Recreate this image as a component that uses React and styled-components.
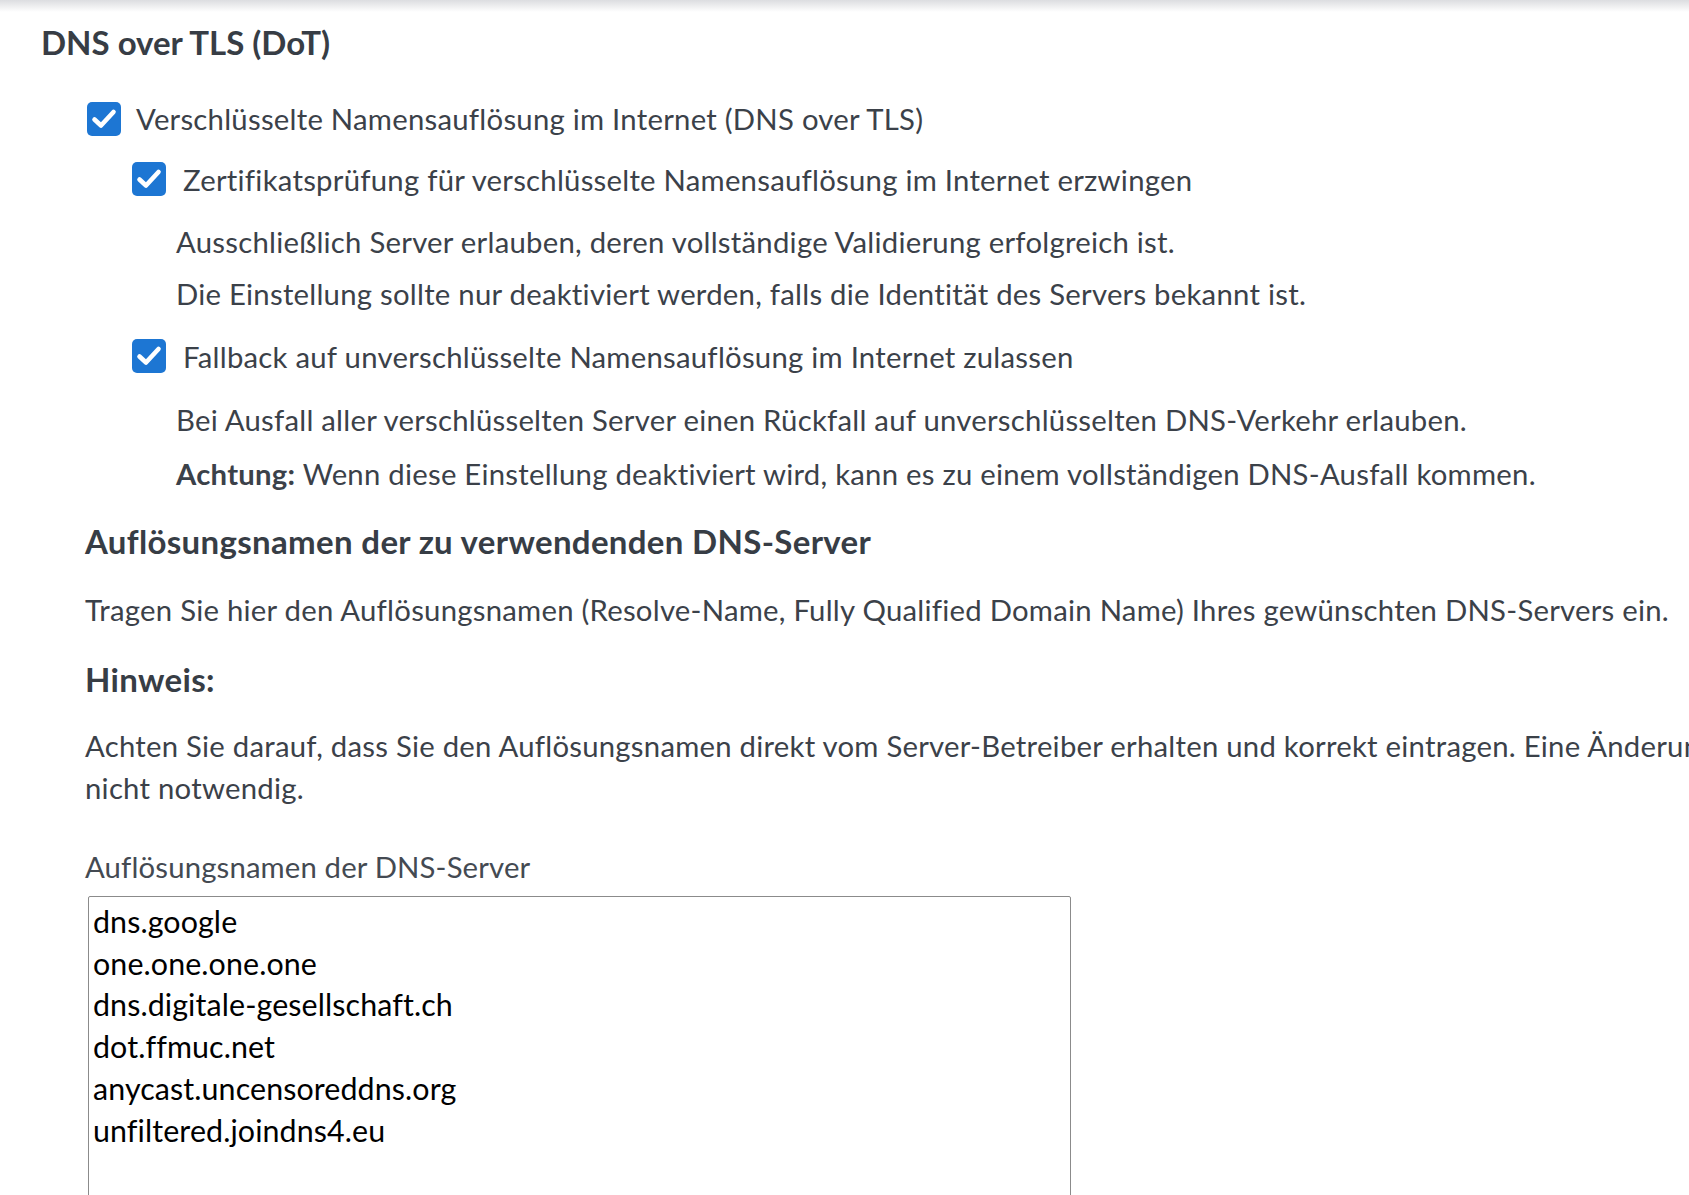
import React from 'react';
import styled, { createGlobalStyle } from 'styled-components';

const GlobalStyle = createGlobalStyle`
  html, body {
    margin: 0;
    padding: 0;
    background: #fff;
    overflow: hidden;
  }
  body {
    font-family: Lato, "Liberation Sans", sans-serif;
    color: #3b4149;
  }
`;

const Page = styled.div`
  width: 1689px;
  height: 1195px;
  overflow: hidden;
`;

const TopShade = styled.div`
  height: 12px;
  background: linear-gradient(to bottom, #dcdde0, #ffffff);
`;

const Content = styled.div`
  display: flex;
  flex-direction: column;
  align-items: flex-start;
  padding: 10.5px 0 0 41px;
`;

const Title = styled.h2`
  margin: 0;
  font-size: 33px;
  line-height: 1.2;
  font-weight: 700;
  color: #373d45;
`;

const CheckRow = styled.label`
  display: flex;
  align-items: flex-start;
  gap: ${({ $gap }) => $gap}px;
  margin-top: ${({ $top }) => $top}px;
  margin-left: ${({ $level }) => ($level === 2 ? 91 : 46)}px;
  font-size: 29.3px;
  letter-spacing: 0.25px;
  line-height: 41.76px;
  white-space: nowrap;
`;

const Box = styled.span`
  flex: none;
  width: 34px;
  height: 34px;
  margin-top: 3.4px;
  border-radius: 5px;
  background: #1d76d3;
  display: flex;
  align-items: center;
  justify-content: center;
`;

const Desc = styled.p`
  margin: ${({ $top }) => $top}px 0 0 135px;
  font-size: 29.3px;
  letter-spacing: 0.25px;
  line-height: 41.76px;
  white-space: nowrap;

  strong {
    font-weight: 700;
  }
`;

const SubHeading = styled.h3`
  margin: ${({ $top }) => $top}px 0 0 44px;
  font-size: 33px;
  letter-spacing: 0.33px;
  line-height: 38.9px;
  font-weight: 700;
  color: #373d45;
`;

const Text = styled.p`
  margin: ${({ $top }) => $top}px 0 0 44px;
  font-size: 29.3px;
  letter-spacing: 0.25px;
  line-height: 41.76px;
  white-space: nowrap;
`;

const FieldLabel = styled.label`
  display: block;
  margin: 37px 0 0 44px;
  font-size: 29.3px;
  letter-spacing: 0.15px;
  line-height: 41.76px;
  color: #444a52;
`;

const ServerList = styled.textarea`
  box-sizing: border-box;
  margin: 8.5px 0 0 47px;
  width: 983px;
  height: 340px;
  padding: 4px 4px 1px;
  border: 1px solid #8b8b8b;
  border-radius: 2px;
  font-family: Lato, "Liberation Sans", sans-serif;
  font-size: 30.4px;
  letter-spacing: 0.1px;
  line-height: 41.76px;
  color: #000;
  background: #fff;
  resize: vertical;
  outline: none;
`;

const Checkbox = () => (
  <Box>
    <svg width="34" height="34" viewBox="0 0 34 34">
      <path
        d="M7.5 17.5 L14 23.5 L26.5 10"
        fill="none"
        stroke="#fff"
        strokeWidth="4.6"
        strokeLinecap="round"
        strokeLinejoin="round"
      />
    </svg>
  </Box>
);

const servers = [
  'dns.google',
  'one.one.one.one',
  'dns.digitale-gesellschaft.ch',
  'dot.ffmuc.net',
  'anycast.uncensoreddns.org',
  'unfiltered.joindns4.eu',
];

const App = () => (
  <Page>
    <GlobalStyle />
    <TopShade />
    <Content>
      <Title>DNS over TLS (DoT)</Title>
      <CheckRow $level={1} $gap={15} $top={36.4}>
        <Checkbox />
        Verschlüsselte Namensauflösung im Internet (DNS over TLS)
      </CheckRow>
      <CheckRow $level={2} $gap={17} $top={18.5}>
        <Checkbox />
        Zertifikatsprüfung für verschlüsselte Namensauflösung im Internet erzwingen
      </CheckRow>
      <Desc $top={20.2}>Ausschließlich Server erlauben, deren vollständige Validierung erfolgreich ist.</Desc>
      <Desc $top={11}>Die Einstellung sollte nur deaktiviert werden, falls die Identität des Servers bekannt ist.</Desc>
      <CheckRow $level={2} $gap={17} $top={20.6}>
        <Checkbox />
        Fallback auf unverschlüsselte Namensauflösung im Internet zulassen
      </CheckRow>
      <Desc $top={21.2}>Bei Ausfall aller verschlüsselten Server einen Rückfall auf unverschlüsselten DNS-Verkehr erlauben.</Desc>
      <Desc $top={12.1}>
        <strong>Achtung:</strong> Wenn diese Einstellung deaktiviert wird, kann es zu einem vollständigen DNS-Ausfall kommen.
      </Desc>
      <SubHeading $top={27.9}>Auflösungsnamen der zu verwendenden DNS-Server</SubHeading>
      <Text $top={28.2}>
        Tragen Sie hier den Auflösungsnamen (Resolve-Name, Fully Qualified Domain Name) Ihres gewünschten DNS-Servers ein.
      </Text>
      <SubHeading $top={29}>Hinweis:</SubHeading>
      <Text $top={26}>
        Achten Sie darauf, dass Sie den Auflösungsnamen direkt vom Server-Betreiber erhalten und korrekt eintragen. Eine Änderung ist normalerweise
        <br />
        nicht notwendig.
      </Text>
      <FieldLabel htmlFor="dot-servers">Auflösungsnamen der DNS-Server</FieldLabel>
      <ServerList id="dot-servers" defaultValue={servers.join('\n')} spellCheck={false} />
    </Content>
  </Page>
);

export default App;
